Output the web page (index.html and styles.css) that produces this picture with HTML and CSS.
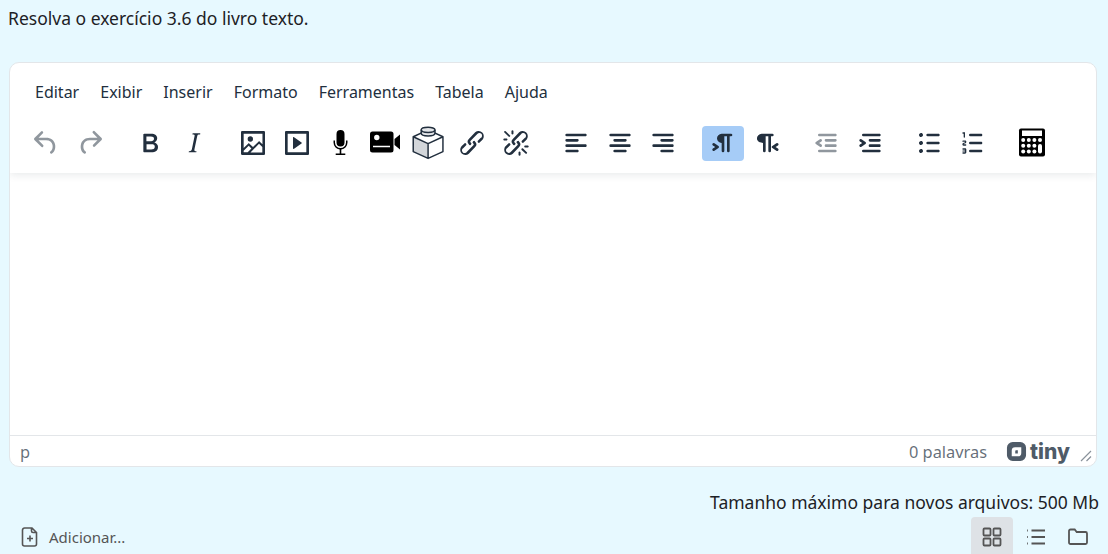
FILE: index.html
```html
<!DOCTYPE html>
<html lang="en">
<head>
    <meta charset="UTF-8">
    <meta name="viewport" content="width=device-width, initial-scale=1.0">
    <title>Resolva o exercício</title>
    <link rel="stylesheet" href="styles.css">
</head>
<body>
    <p class="task">Resolva o exercício 3.6 do livro texto.</p>
    <div class="editor">
        <div class="editor-header">
            <nav class="menubar">
                <span>Editar</span><span>Exibir</span><span>Inserir</span><span>Formato</span><span>Ferramentas</span><span>Tabela</span><span>Ajuda</span>
            </nav>
            <div class="toolbar">
                <div class="tool-group">
                    <button class="tool disabled"><svg viewBox="0 0 24 24"><path d="M6.4 8H12c3.7 0 6.2 2 6.8 5.1.6 2.7-.4 5.6-2.3 6.8a1 1 0 0 1-1-1.8c1.1-.6 1.8-2.7 1.4-4.6-.5-2.1-2.1-3.5-4.9-3.5H6.4l3.3 3.3a1 1 0 1 1-1.4 1.4l-5-5a1 1 0 0 1 0-1.4l5-5a1 1 0 0 1 1.4 1.4L6.4 8Z"/></svg></button>
                    <button class="tool disabled"><svg viewBox="0 0 24 24"><path d="M17.6 10H12c-2.8 0-4.4 1.4-4.9 3.5-.4 2 .3 4 1.4 4.6a1 1 0 1 1-1 1.8c-2-1.2-2.9-4.1-2.3-6.8.6-3 3-5.1 6.8-5.1h5.6l-3.3-3.3a1 1 0 1 1 1.4-1.4l5 5a1 1 0 0 1 0 1.4l-5 5a1 1 0 0 1-1.4-1.4l3.3-3.3Z"/></svg></button>
                </div>
                <div class="tool-group">
                    <button class="tool"><svg viewBox="0 0 24 24"><path d="M7.8 19c-.3 0-.5 0-.6-.2l-.2-.5V5.7c0-.2 0-.4.2-.5l.6-.2h5c1.5 0 2.7.3 3.5 1 .7.6 1.1 1.4 1.1 2.5a3 3 0 0 1-.6 1.9c-.4.6-1 1-1.6 1.2.4.1.9.3 1.3.6s.8.7 1 1.2c.4.4.5 1 .5 1.6 0 1.3-.4 2.3-1.3 3-.8.7-2.1 1-3.8 1H7.8Zm5-8.3c.6 0 1.2-.1 1.6-.5.4-.3.6-.7.6-1.3 0-1.1-.8-1.7-2.3-1.7H9.3v3.5h3.4Zm.5 6c.7 0 1.3-.1 1.7-.4.4-.4.6-.9.6-1.5s-.2-1-.7-1.4c-.4-.3-1-.4-2-.4H9.4v3.8h4Z"/></svg></button>
                    <button class="tool"><svg viewBox="0 0 24 24"><path d="m16.7 4.7-.1.9h-.3c-.6 0-1 0-1.4.3-.3.3-.4.6-.5 1.1l-2.1 9.8v.6c0 .5.4.8 1.4.8h.2l-.2.8H8l.2-.8h.2c1.1 0 1.8-.5 2-1.5l2-9.8.1-.5c0-.6-.4-.8-1.4-.8h-.3l.2-.9h5.8Z"/></svg></button>
                </div>
                <div class="tool-group">
                    <button class="tool"><svg viewBox="0 0 24 24"><path d="m5 15.7 3.3-3.2c.3-.3.7-.3 1 0L12 15l4.1-4c.3-.4.8-.4 1 0l2 1.9V5H5v10.7ZM5 18V19h3l2.8-2.9-2-2L5 17.9Zm14-3-2.5-2.4-6.4 6.5H19v-4ZM4 3h16c.6 0 1 .4 1 1v16c0 .6-.4 1-1 1H4a1 1 0 0 1-1-1V4c0-.6.4-1 1-1Zm6 8a2 2 0 1 0 0-4 2 2 0 0 0 0 4Z"/></svg></button>
                    <button class="tool"><svg viewBox="0 0 24 24"><path d="M4 3h16c.6 0 1 .4 1 1v16c0 .6-.4 1-1 1H4a1 1 0 0 1-1-1V4c0-.6.4-1 1-1Zm1 2v14h14V5H5Zm4.8 2.6 5.6 4a.5.5 0 0 1 0 .8l-5.6 4A.5.5 0 0 1 9 16V8a.5.5 0 0 1 .8-.4Z"/></svg></button>
                    <button class="tool black"><svg viewBox="0 0 32 32"><path d="M15.500 3a4 4 0 0 0-4 4v8.500a4 4 0 0 0 8 0V7a4 4 0 0 0-4-4Z"/><path d="M8.500 13.500h1.500v2.100a5.500 5.500 0 0 0 11 0v-2.100h1.500v2.100a7 7 0 0 1-6.200 6.900v4h4v1.600h-9.600v-1.600h4v-4a7 7 0 0 1-6.200-6.900Z"/></svg></button>
                    <button class="tool black"><svg viewBox="0 0 32 32"><path fill-rule="evenodd" d="M3.500 4.500h18.500a2.500 2.500 0 0 1 2.500 2.500v16a2.500 2.500 0 0 1-2.500 2.500H3.500A2.500 2.500 0 0 1 1 23V7a2.500 2.500 0 0 1 2.500-2.500Zm4.300 3.300a2.700 2.700 0 1 0 0 5.400 2.700 2.700 0 0 0 0-5.400ZM4 18.700v1.600h17v-1.600H4Z"/><path d="M25.500 12 31 7.500v15L25.500 18Z"/></svg></button>
                    <button class="tool"><svg class="block" viewBox="2.800 2.500 28 28"><path fill="#d3d6da" d="M3 11l13 6v13l-13-6Z"/><path fill="none" stroke="#222f3e" stroke-width="1.300" stroke-linejoin="round" d="M3 11 16 5l13 6v13l-13 6-13-6ZM3 11l13 6 13-6M16 17v13"/><path fill="#e4e6e9" stroke="#222f3e" stroke-width="1.300" d="M10 5v3c0 1.300 2.700 2.300 6 2.300s6-1 6-2.300V5c0-1.300-2.700-2.300-6-2.300S10 3.700 10 5Z"/><path fill="none" stroke="#222f3e" stroke-width="1.300" d="M10 5c0 1.300 2.700 2.300 6 2.300s6-1 6-2.300"/></svg></button>
                    <button class="tool shift"><svg viewBox="0 0 24 24"><path d="M6.2 12.3a1 1 0 0 1 1.4 1.4l-2 2a2 2 0 1 0 2.6 2.8l4.8-4.800a1 1 0 0 0 0-1.400 1 1 0 1 1 1.400-1.300 2.900 2.900 0 0 1 0 4L9.600 20a3.900 3.900 0 0 1-5.500-5.500l2-2Zm11.600-.6a1 1 0 0 1-1.400-1.400l2-2a2 2 0 1 0-2.600-2.800L11 10.300a1 1 0 0 0 0 1.400A1 1 0 1 1 9.600 13a2.900 2.900 0 0 1 0-4L14.400 4a3.900 3.900 0 0 1 5.500 5.500l-2 2Z"/></svg></button>
                    <button class="tool shift"><svg viewBox="0 0 24 24"><path d="M6.200 12.300a1 1 0 0 1 1.400 1.400l-2.100 2a2 2 0 1 0 2.700 2.800l4.800-4.800a1 1 0 0 0 0-1.400 1 1 0 1 1 1.400-1.300 2.900 2.900 0 0 1 0 4L9.600 20a3.900 3.900 0 0 1-5.500-5.500l2-2Zm11.600-.6a1 1 0 0 1-1.400-1.400l2.100-2a2 2 0 1 0-2.700-2.800L11 10.300a1 1 0 0 0 0 1.400A1 1 0 1 1 9.600 13a2.900 2.900 0 0 1 0-4L14.400 4a3.900 3.900 0 0 1 5.500 5.500l-2 2ZM7.600 6.300a.8.8 0 0 1-1 1.100L3.300 4.200a.7.7 0 1 1 1-1l3.200 3.100ZM5.100 8.600a.8.8 0 0 1 0 1.500H3a.8.8 0 0 1 0-1.500H5Zm5-3.500a.8.8 0 0 1-1.500 0V3a.8.8 0 0 1 1.500 0V5Zm6 11.800a.8.8 0 0 1 1-1l3.200 3.200a.8.8 0 0 1-1 1L16 17Zm-2.200 2a.8.8 0 0 1 1.500 0V21a.8.8 0 0 1-1.500 0V19Zm5-3.500a.7.7 0 1 1 0-1.500H21a.8.8 0 0 1 0 1.500H19Z"/></svg></button>
                </div>
                <div class="tool-group">
                    <button class="tool"><svg viewBox="0 0 24 24"><path d="M5 5h14c.6 0 1 .4 1 1s-.4 1-1 1H5a1 1 0 1 1 0-2Zm0 4h8c.6 0 1 .4 1 1s-.4 1-1 1H5a1 1 0 1 1 0-2Zm0 8h8c.6 0 1 .4 1 1s-.4 1-1 1H5a1 1 0 0 1 0-2Zm0-4h14c.6 0 1 .4 1 1s-.4 1-1 1H5a1 1 0 0 1 0-2Z"/></svg></button>
                    <button class="tool"><svg viewBox="0 0 24 24"><path d="M5 5h14c.6 0 1 .4 1 1s-.4 1-1 1H5a1 1 0 1 1 0-2Zm3 4h8c.6 0 1 .4 1 1s-.4 1-1 1H8a1 1 0 1 1 0-2Zm0 8h8c.6 0 1 .4 1 1s-.4 1-1 1H8a1 1 0 0 1 0-2Zm-3-4h14c.6 0 1 .4 1 1s-.4 1-1 1H5a1 1 0 0 1 0-2Z"/></svg></button>
                    <button class="tool shift"><svg viewBox="0 0 24 24"><path d="M5 5h14c.6 0 1 .4 1 1s-.4 1-1 1H5a1 1 0 1 1 0-2Zm6 4h8c.6 0 1 .4 1 1s-.4 1-1 1h-8a1 1 0 0 1 0-2Zm0 8h8c.6 0 1 .4 1 1s-.4 1-1 1h-8a1 1 0 0 1 0-2Zm-6-4h14c.6 0 1 .4 1 1s-.4 1-1 1H5a1 1 0 0 1 0-2Z"/></svg></button>
                </div>
                <div class="tool-group">
                    <button class="tool active"><svg viewBox="0 0 24 24"><path d="M11 5h7a1 1 0 0 1 0 2h-1v11a1 1 0 0 1-2 0V7h-2v11a1 1 0 0 1-2 0v-6c-.5 0-1 0-1.400-.3A3.400 3.400 0 0 1 7.800 10a3.300 3.300 0 0 1 0-2.800 3.400 3.400 0 0 1 1.800-1.800L11 5ZM4.400 16.200 6.200 15l-1.800-1.200a1 1 0 0 1 1.200-1.600l3 2a1 1 0 0 1 0 1.600l-3 2a1 1 0 1 1-1.200-1.600Z"/></svg></button>
                    <button class="tool"><svg viewBox="0 0 24 24"><path d="M8 5h8a1 1 0 0 1 0 2h-1v11a1 1 0 0 1-2 0V7h-2v11a1 1 0 0 1-2 0v-6c-.5 0-1 0-1.400-.3A3.400 3.400 0 0 1 4.800 10a3.300 3.300 0 0 1 0-2.800 3.400 3.400 0 0 1 1.800-1.800L8 5Zm12.200 11.200a1 1 0 1 1-1.200 1.600l-3-2a1 1 0 0 1 0-1.600l3-2a1 1 0 1 1 1.200 1.600L18.400 15l1.800 1.200Z"/></svg></button>
                </div>
                <div class="tool-group">
                    <button class="tool disabled"><svg viewBox="0 0 24 24"><path d="M7 5h12c.6 0 1 .4 1 1s-.4 1-1 1H7a1 1 0 1 1 0-2Zm5 4h7c.6 0 1 .4 1 1s-.4 1-1 1h-7a1 1 0 0 1 0-2Zm0 4h7c.6 0 1 .4 1 1s-.4 1-1 1h-7a1 1 0 0 1 0-2Zm-5 4h12a1 1 0 0 1 0 2H7a1 1 0 0 1 0-2Zm1.600-3.800a1 1 0 0 1-1.200 1.600l-3-2a1 1 0 0 1 0-1.600l3-2a1 1 0 0 1 1.200 1.600L6.800 12l1.800 1.200Z"/></svg></button>
                    <button class="tool"><svg viewBox="0 0 24 24"><path d="M7 5h12c.6 0 1 .4 1 1s-.4 1-1 1H7a1 1 0 1 1 0-2Zm5 4h7c.6 0 1 .4 1 1s-.4 1-1 1h-7a1 1 0 0 1 0-2Zm0 4h7c.6 0 1 .4 1 1s-.4 1-1 1h-7a1 1 0 0 1 0-2Zm-5 4h12a1 1 0 0 1 0 2H7a1 1 0 0 1 0-2Zm-2.600-3.800L6.200 12l-1.800-1.200a1 1 0 0 1 1.200-1.600l3 2a1 1 0 0 1 0 1.600l-3 2a1 1 0 1 1-1.200-1.600Z"/></svg></button>
                </div>
                <div class="tool-group">
                    <button class="tool"><svg viewBox="0 0 24 24"><path d="M11 5h8c.6 0 1 .4 1 1s-.4 1-1 1h-8a1 1 0 0 1 0-2Zm0 6h8c.6 0 1 .4 1 1s-.4 1-1 1h-8a1 1 0 0 1 0-2Zm0 6h8c.6 0 1 .4 1 1s-.4 1-1 1h-8a1 1 0 0 1 0-2ZM4.500 6c0-.4.1-.8.4-1 .3-.4.7-.5 1.100-.5.4 0 .8.1 1 .4.4.3.5.7.5 1.100 0 .4-.1.8-.4 1-.3.4-.7.5-1.100.5-.4 0-.8-.1-1-.4-.4-.3-.5-.7-.5-1.100Zm0 6c0-.4.1-.8.4-1 .3-.4.7-.5 1.100-.5.4 0 .8.1 1 .4.4.3.5.7.5 1.100 0 .4-.1.8-.4 1-.3.4-.7.5-1.100.5-.4 0-.8-.1-1-.4-.4-.3-.5-.7-.5-1.100Zm0 6c0-.4.1-.8.4-1 .3-.4.7-.5 1.100-.5.4 0 .8.1 1 .4.4.3.5.7.5 1.100 0 .4-.1.8-.4 1-.3.4-.7.5-1.100.5-.4 0-.8-.1-1-.4-.4-.3-.5-.7-.5-1.100Z"/></svg></button>
                    <button class="tool"><svg viewBox="0 0 24 24"><path d="M10 17h8c.6 0 1 .4 1 1s-.4 1-1 1h-8a1 1 0 0 1 0-2Zm0-6h8c.6 0 1 .4 1 1s-.4 1-1 1h-8a1 1 0 0 1 0-2Zm0-6h8c.6 0 1 .4 1 1s-.4 1-1 1h-8a1 1 0 1 1 0-2ZM6 4v3.500c0 .3-.2.5-.5.5a.5.5 0 0 1-.5-.5V5h-.5a.5.5 0 0 1 0-1H6Zm-1 8.800.2.2h1.300c.3 0 .5.2.5.5s-.2.5-.5.5H4.900a1 1 0 0 1-.9-1V13c0-.4.3-.8.6-1l1.200-.4.2-.3a.2.2 0 0 0-.2-.2H4.500a.5.5 0 0 1-.5-.5c0-.3.2-.5.5-.5h1.600c.5 0 .9.4.9 1v.1c0 .4-.3.8-.6 1l-1.200.4-.2.3ZM7 17v2c0 .6-.4 1-1 1H4.500a.5.5 0 0 1 0-1h1.200c.2 0 .3-.1.3-.3 0-.2-.1-.3-.3-.3H4.400a.4.4 0 1 1 0-.8h1.300c.2 0 .3-.1.3-.3 0-.2-.1-.3-.3-.3H4.500a.5.5 0 1 1 0-1H6c.6 0 1 .4 1 1Z"/></svg></button>
                </div>
                <div class="tool-group">
                    <button class="tool black"><svg viewBox="0 0 32 32"><rect x="3" y="1.500" width="26" height="28" rx="2"/><g fill="#fff"><rect x="6" y="3.500" width="20" height="5.500"/><circle cx="7.200" cy="13" r="2"/><circle cx="12.800" cy="13" r="2"/><circle cx="18.400" cy="13" r="2"/><circle cx="24" cy="13" r="2"/><circle cx="7.200" cy="18.800" r="2"/><circle cx="12.800" cy="18.800" r="2"/><circle cx="18.400" cy="18.800" r="2"/><circle cx="7.200" cy="24.500" r="2"/><circle cx="12.800" cy="24.500" r="2"/><circle cx="18.400" cy="24.500" r="2"/><rect x="22" y="17" width="4" height="9.500" rx="2"/></g></svg></button>
                </div>
            </div>
        </div>
        <div class="edit-area"></div>
        <div class="statusbar">
            <span class="path">p</span>
            <span class="words">0 palavras</span>
            <span class="brand">
                <svg viewBox="0 0 22 22"><path fill-rule="evenodd" d="M7 1h8a6 6 0 0 1 6 6v8a6 6 0 0 1-6 6H7a6 6 0 0 1-6-6V7a6 6 0 0 1 6-6ZM6 10a3.500 3.500 0 0 1 3.500-3.500H16v6a3.500 3.500 0 0 1-3.500 3.500H6v-6Zm3.700.500v2.500h2.700v-3.300h-1.900a.8.8 0 0 0-.8.8Z"/></svg>
                tiny
            </span>
            <svg class="resize" viewBox="0 0 12 12"><path d="M1 11 11 1M6.500 11 11 6.500"/></svg>
        </div>
    </div>
    <p class="limit">Tamanho máximo para novos arquivos: 500 Mb</p>
    <div class="files">
        <span class="add">
            <svg viewBox="0 0 20 20"><path d="M4.500 1h7.500l4.500 4.500v11.500a2 2 0 0 1-2 2h-10a2 2 0 0 1-2-2v-14a2 2 0 0 1 2-2ZM11.500 1v3a1.500 1.500 0 0 0 1.500 1.500h3.500M10 8.500v6M7 11.500h6"/></svg>
            Adicionar...
        </span>
        <div class="views">
            <span class="view current"><svg viewBox="0 0 20 20"><rect x="1.500" y="1.500" width="7" height="7" rx="1"/><rect x="11.500" y="1.500" width="7" height="7" rx="1"/><rect x="1.500" y="11.500" width="7" height="7" rx="1"/><rect x="11.500" y="11.500" width="7" height="7" rx="1"/></svg></span>
            <span class="view"><svg viewBox="0 0 20 20"><path d="M5.500 3.500H19M5.500 10H19M5.500 16.500H19M1 3.500h.8M1 10h.8M1 16.500h.8"/></svg></span>
            <span class="view"><svg viewBox="0 0 20 20"><path d="M1 4a1.500 1.500 0 0 1 1.500-1.500h4.200l2 2.500h8.800A1.500 1.500 0 0 1 19 6.500v9a1.500 1.500 0 0 1-1.500 1.500h-15A1.500 1.500 0 0 1 1 15.500Z"/></svg></span>
        </div>
    </div>
</body>
</html>
```

FILE: styles.css
```css
html, body {
    height: 100%;
    overflow: hidden;
}
body {
    margin: 0;
    padding: 0 9px;
    background-color: #e7f9ff;
    font-family: "Noto Sans", "Open Sans", sans-serif;
    font-size: 16px;
    color: #1d2125;
    box-sizing: border-box;
}
.task {
    margin: 0 0 0 -1px;
    padding-top: 6px;
    height: 62px;
    box-sizing: border-box;
    line-height: 24px;
    font-size: 17.5px;
}
.editor {
    height: 405px;
    margin-right: 2px;
    display: flex;
    flex-direction: column;
    box-sizing: border-box;
    background-color: #fff;
    border: 1px solid #e3e6e9;
    border-radius: 10px;
    overflow: hidden;
}
.editor-header {
    height: 110px;
    flex: none;
    box-shadow: 0 2px 8px rgba(34, 47, 62, 0.1);
    position: relative;
}
.menubar {
    display: flex;
    gap: 21px;
    padding: 16px 0 0 25px;
    height: 45px;
    line-height: 26px;
    box-sizing: border-box;
    color: #222f3e;
}
.toolbar {
    display: flex;
    padding: 18px 0 0 15px;
}
.tool-group {
    display: flex;
    gap: 2px;
    margin-right: 17px;
}
.tool-group:first-child {
    margin-right: 18px;
}
.tool {
    width: 42px;
    height: 35px;
    padding: 0;
    border: none;
    border-radius: 4px;
    background: none;
    display: flex;
    align-items: center;
    justify-content: center;
    fill: #222f3e;
}
.tool svg {
    width: 32px;
    height: 32px;
    flex: none;
    margin-top: -2px;
}
.tool.shift svg {
    margin-left: -2px;
}
.tool svg.block {
    overflow: visible;
}
.tool.disabled {
    fill: rgba(34, 47, 62, 0.5);
}
.tool.active {
    background-color: #a6ccf7;
}
.tool.black {
    fill: #000;
}
.edit-area {
    flex: 1;
}
.statusbar {
    height: 31px;
    flex: none;
    display: flex;
    align-items: center;
    box-sizing: border-box;
    border-top: 1px solid #e3e6e9;
    padding: 0 4px 0 10px;
    font-size: 16.4px;
    color: rgba(34, 47, 62, 0.7);
}
.path {
    flex: 1;
}
.brand {
    display: flex;
    align-items: center;
    gap: 3px;
    margin-left: 19px;
    font-family: Inter, sans-serif;
    font-weight: 800;
    font-size: 21px;
    color: #4f5b68;
    fill: #4f5b68;
}
.brand svg {
    width: 21px;
    height: 21px;
}
.resize {
    width: 12px;
    height: 12px;
    margin: 10px 0 0 10px;
    fill: none;
    stroke: #8a929b;
    stroke-width: 1.2;
}
.limit {
    margin: 0;
    height: 50px;
    padding-top: 23px;
    box-sizing: border-box;
    line-height: 24px;
    text-align: right;
    font-size: 17.5px;
}
.files {
    display: flex;
    align-items: center;
    justify-content: space-between;
    height: 40px;
}
.add {
    display: flex;
    align-items: center;
    gap: 9px;
    padding-left: 11px;
    font-size: 15px;
    color: #555;
}
.add svg {
    width: 20px;
    height: 20px;
    fill: none;
    stroke: #555;
    stroke-width: 1.6;
}
.views {
    display: flex;
}
.view {
    width: 42px;
    height: 40px;
    display: flex;
    align-items: center;
    justify-content: center;
    border-radius: 4px;
}
.view.current {
    background-color: #dee2e6;
    margin-right: 2px;
}
.view svg {
    width: 20px;
    height: 20px;
    fill: none;
    stroke: #555;
    stroke-width: 1.8;
}
```
